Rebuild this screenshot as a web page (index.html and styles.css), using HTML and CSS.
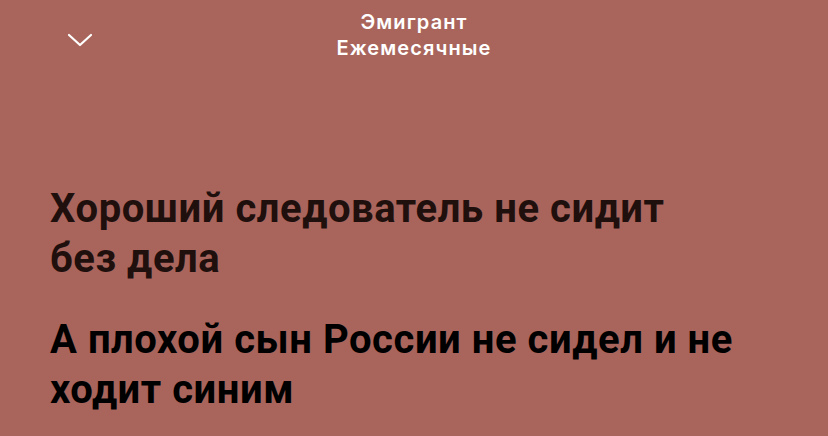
FILE: index.html
```html
<!DOCTYPE html>
<html lang="ru">
<head>
<meta charset="utf-8">
<title>Эмигрант — Ежемесячные</title>
<link rel="stylesheet" href="styles.css">
</head>
<body>
<div class="screen">
  <header class="topbar">
    <button class="collapse" aria-label="Свернуть">
      <svg width="26" height="14" viewBox="0 0 26 14" fill="none">
        <path d="M2 2 L13 12 L24 2" stroke="#fff" stroke-width="2.2" stroke-linecap="round" stroke-linejoin="round"/>
      </svg>
    </button>
    <div class="track">
      <div class="track-title">Эмигрант</div>
      <div class="track-artist">Ежемесячные</div>
    </div>
  </header>
  <main class="lyrics">
    <p class="line past">Хороший следователь не сидит без дела</p>
    <p class="line current">А плохой сын России не сидел и не ходит синим</p>
  </main>
</div>
</body>
</html>
```
FILE: styles.css
```css
html, body {
  margin: 0;
  padding: 0;
  background: #a9655c;
}

.screen {
  width: 828px;
  height: 436px;
  overflow: hidden;
  background: #a9655c;
  font-family: Roboto, "Noto Sans", sans-serif;
}

.topbar {
  position: relative;
  height: 80px;
  display: flex;
  justify-content: center;
  padding-top: 9px;
  box-sizing: border-box;
}

.collapse {
  position: absolute;
  left: 62px;
  top: 26px;
  width: 36px;
  height: 28px;
  padding: 0;
  border: 0;
  background: none;
  display: flex;
  align-items: center;
  justify-content: center;
}

.track {
  text-align: center;
  color: #fff;
  font-family: Inter, Roboto, sans-serif;
  font-weight: 600;
  font-size: 20px;
  line-height: 26px;
  letter-spacing: 1.1px;
}

.lyrics {
  width: 689px;
  padding: 104px 0 0 50px;
  display: flex;
  flex-direction: column;
  gap: 31px;
}

.line {
  margin: 0;
  font-size: 40px;
  font-weight: 700;
  line-height: 50px;
  letter-spacing: 0.55px;
}

.line.past {
  color: #1f0f0d;
}

.line.current {
  color: #000;
}
```
